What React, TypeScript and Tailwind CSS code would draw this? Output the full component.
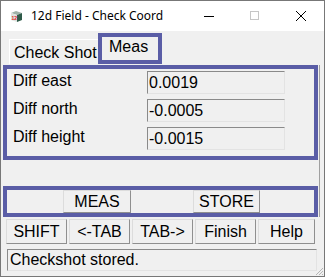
import React from "react";

const sunken =
  "border border-t-[#8a8a8a] border-l-[#8a8a8a] border-b-[#e3e3e3] border-r-[#e3e3e3]";
const raised =
  "border border-t-[#dcdcdc] border-l-[#dcdcdc] border-b-[#8f8f8f] border-r-[#8f8f8f] bg-[#f0f0f0]";

function AppIcon() {
  return (
    <svg width="13" height="13" viewBox="0 0 13 13" className="shrink-0">
      <polygon points="1,3 6,1 12,3 7,5" fill="#9fb2a8" />
      <polygon points="1,3 7,5 7,12 1,10" fill="#dfe3df" />
      <polygon points="7,5 12,3 12,10 7,12" fill="#2e5b49" />
      <text x="1.6" y="9.5" fontSize="5" fill="#d22" fontFamily="Liberation Sans, sans-serif" fontWeight="bold">
        12
      </text>
    </svg>
  );
}

function TitleBar() {
  return (
    <div className="flex h-[30px] items-center bg-white">
      <div className="ml-[9px] mt-[1px]">
        <AppIcon />
      </div>
      <span className="ml-[8px] font-['Noto_Sans',sans-serif] text-[12px] text-black">
        12d Field - Check Coord
      </span>
      <div className="ml-auto flex items-center">
        {/* minimise */}
        <svg width="46" height="30" viewBox="0 0 46 30">
          <line x1="18" y1="15.5" x2="28" y2="15.5" stroke="#000" strokeWidth="1" />
        </svg>
        {/* maximise (disabled) */}
        <svg width="46" height="30" viewBox="0 0 46 30">
          <rect x="18.5" y="10.5" width="8" height="8" fill="none" stroke="#c6c6c6" strokeWidth="1" />
        </svg>
        {/* close */}
        <svg width="46" height="30" viewBox="0 0 46 30">
          <line x1="18" y1="10" x2="28" y2="20" stroke="#000" strokeWidth="1" />
          <line x1="28" y1="10" x2="18" y2="20" stroke="#000" strokeWidth="1" />
        </svg>
      </div>
    </div>
  );
}

export default function App() {
  const rows = [
    { label: "Diff east", value: "0.0019" },
    { label: "Diff north", value: "-0.0005" },
    { label: "Diff height", value: "-0.0015" },
  ];
  const bottomButtons = [
    { label: "SHIFT", w: "w-[61px]" },
    { label: "<-TAB", w: "w-[61px]" },
    { label: "TAB->", w: "w-[61px]" },
    { label: "Finish", w: "w-[61px]" },
    { label: "Help", w: "w-[57px]" },
  ];

  return (
    <div className="relative flex h-[277px] w-[325px] flex-col overflow-hidden border border-[#777777] bg-[#f0f0f0] font-['Liberation_Sans',Arial,sans-serif] text-[16px] text-black">
      <TitleBar />

      {/* Tabs */}
      <div className="mt-[2px] flex h-[31px] items-end pl-[8px]">
        <div className="flex h-[25px] w-[89px] items-center border-l border-t border-l-white border-t-white pl-[4px] pt-[1px]">
          Check Shot
        </div>
        <div className="flex h-[31px] w-[64px] items-center border-4 border-[#5a5da6] pb-[3px] pl-[7px]">
          Meas
        </div>
      </div>

      {/* Tab page */}
      <div className="ml-[2px] mt-[1px] w-[317px] border-r border-r-[#a0a0a0]">
        <div className="flex h-[95px] w-[315px] flex-col gap-[5px] border-4 border-[#5a5da6] pt-[2px]">
          {rows.map((r) => (
            <div key={r.label} className="flex h-[23px] items-center">
              <div className="w-[140px] pb-[4px] pl-[6px]">{r.label}</div>
              <div className={`flex h-[23px] w-[138px] items-center pl-[1px] ${sunken}`}>{r.value}</div>
            </div>
          ))}
        </div>

        <div className="h-[26px]" />

        <div className="flex h-[31px] w-[315px] border-4 border-[#5a5da6]">
          <div className={`ml-[56px] flex w-[68px] items-center justify-center ${raised}`}>MEAS</div>
          <div className={`ml-[62px] flex w-[67px] items-center justify-center ${raised}`}>STORE</div>
        </div>
      </div>

      {/* Bottom buttons */}
      <div className="ml-[5px] mt-[2px] flex h-[25px] gap-[2px]">
        {bottomButtons.map((b) => (
          <div key={b.label} className={`flex items-center justify-center ${b.w} ${raised}`}>
            {b.label}
          </div>
        ))}
      </div>

      {/* Status */}
      <div className={`ml-[6px] mt-[5px] flex h-[22px] w-[310px] items-center pl-[2px] ${sunken}`}>
        Checkshot stored.
      </div>

      {/* resize grip */}
      <svg width="10" height="10" viewBox="0 0 10 10" className="absolute bottom-0 right-0">
        <line x1="9" y1="2" x2="2" y2="9" stroke="#b5b5b5" />
        <line x1="9" y1="5" x2="5" y2="9" stroke="#b5b5b5" />
        <line x1="9" y1="8" x2="8" y2="9" stroke="#b5b5b5" />
      </svg>
    </div>
  );
}
